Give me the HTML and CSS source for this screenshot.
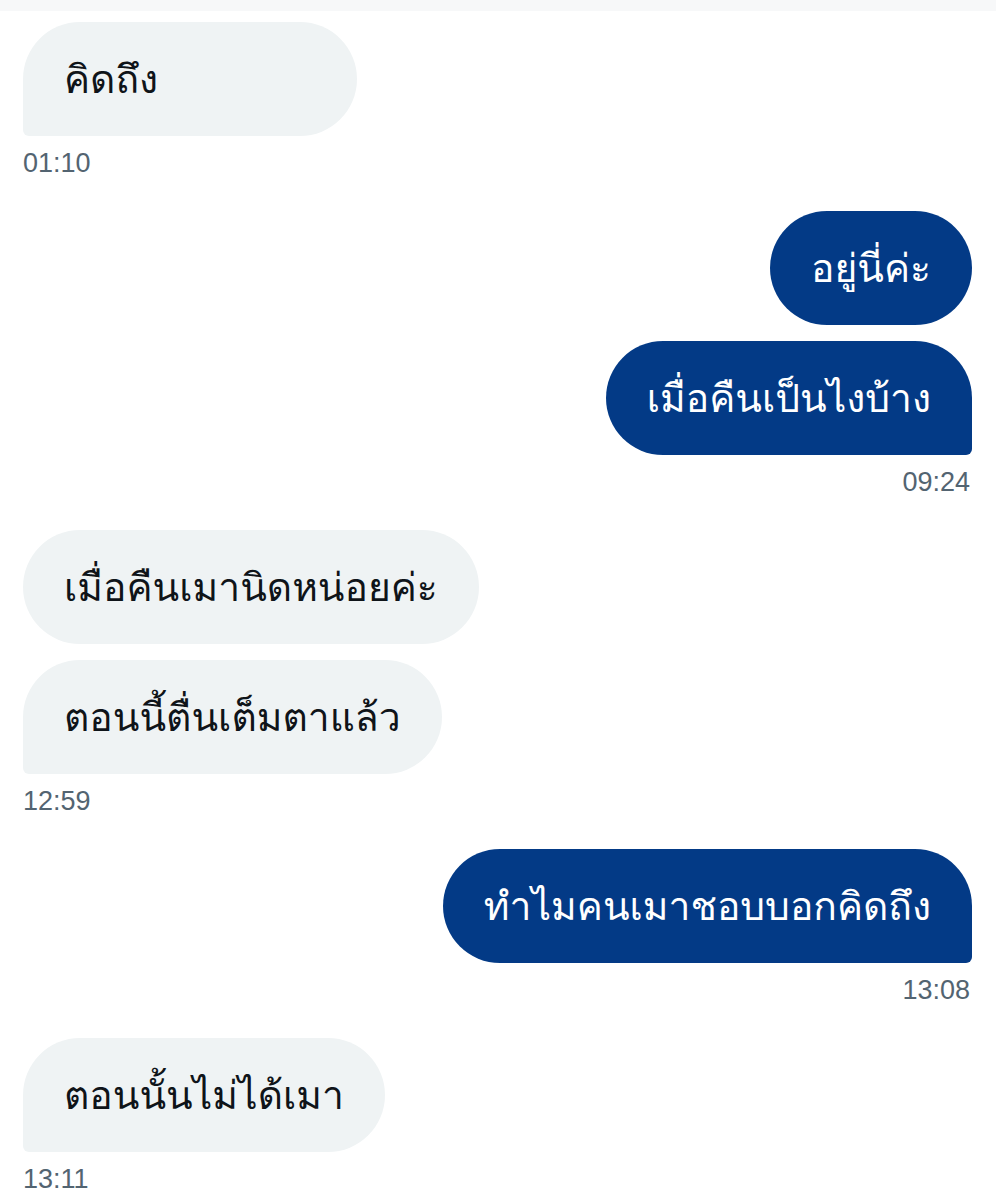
FILE: index.html
```html
<!DOCTYPE html>
<html lang="th">
<head>
<meta charset="utf-8">
<title>Chat</title>
<link rel="stylesheet" href="styles.css">
</head>
<body>
<div class="topbar"></div>
<main class="chat">
  <section class="group in">
    <div class="bubble tail wide">คิดถึง</div>
    <div class="time">01:10</div>
  </section>
  <section class="group out">
    <div class="bubble">อยู่นี่ค่ะ</div>
    <div class="bubble tail">เมื่อคืนเป็นไงบ้าง</div>
    <div class="time">09:24</div>
  </section>
  <section class="group in">
    <div class="bubble">เมื่อคืนเมานิดหน่อยค่ะ</div>
    <div class="bubble tail">ตอนนี้ตื่นเต็มตาแล้ว</div>
    <div class="time">12:59</div>
  </section>
  <section class="group out">
    <div class="bubble tail">ทำไมคนเมาชอบบอกคิดถึง</div>
    <div class="time">13:08</div>
  </section>
  <section class="group in">
    <div class="bubble tail">ตอนนั้นไม่ได้เมา</div>
    <div class="time">13:11</div>
  </section>
</main>
</body>
</html>
```
FILE: styles.css
```css
html, body {
  margin: 0;
  padding: 0;
  background: #ffffff;
}
body {
  font-family: "Loma", "Noto Sans Thai Looped", "Noto Sans Thai", "Liberation Sans", sans-serif;
}
.topbar {
  height: 11px;
  background: #f7f8f9;
}
.chat {
  display: flex;
  flex-direction: column;
  gap: 33px;
  padding: 11px 24px 0 23px;
}
.group {
  display: flex;
  flex-direction: column;
  gap: 16px;
}
.group.in { align-items: flex-start; }
.group.out { align-items: flex-end; }
.bubble {
  box-sizing: border-box;
  height: 114px;
  padding: 0 41px;
  font-size: 39px;
  line-height: 114px;
  border-radius: 57px;
  white-space: nowrap;
}
.in .bubble {
  background: #eff3f4;
  color: #0f1419;
}
.out .bubble {
  background: #033a86;
  color: #ffffff;
}
.in .bubble.tail { border-bottom-left-radius: 6px; }
.out .bubble.tail { border-bottom-right-radius: 6px; }
.bubble.wide { min-width: 334px; }
.time {
  margin-top: -4px;
  font-family: "Liberation Sans", Arial, sans-serif;
  font-size: 27px;
  line-height: 30px;
  color: #536471;
}
.out .time { padding-right: 2px; }
```
